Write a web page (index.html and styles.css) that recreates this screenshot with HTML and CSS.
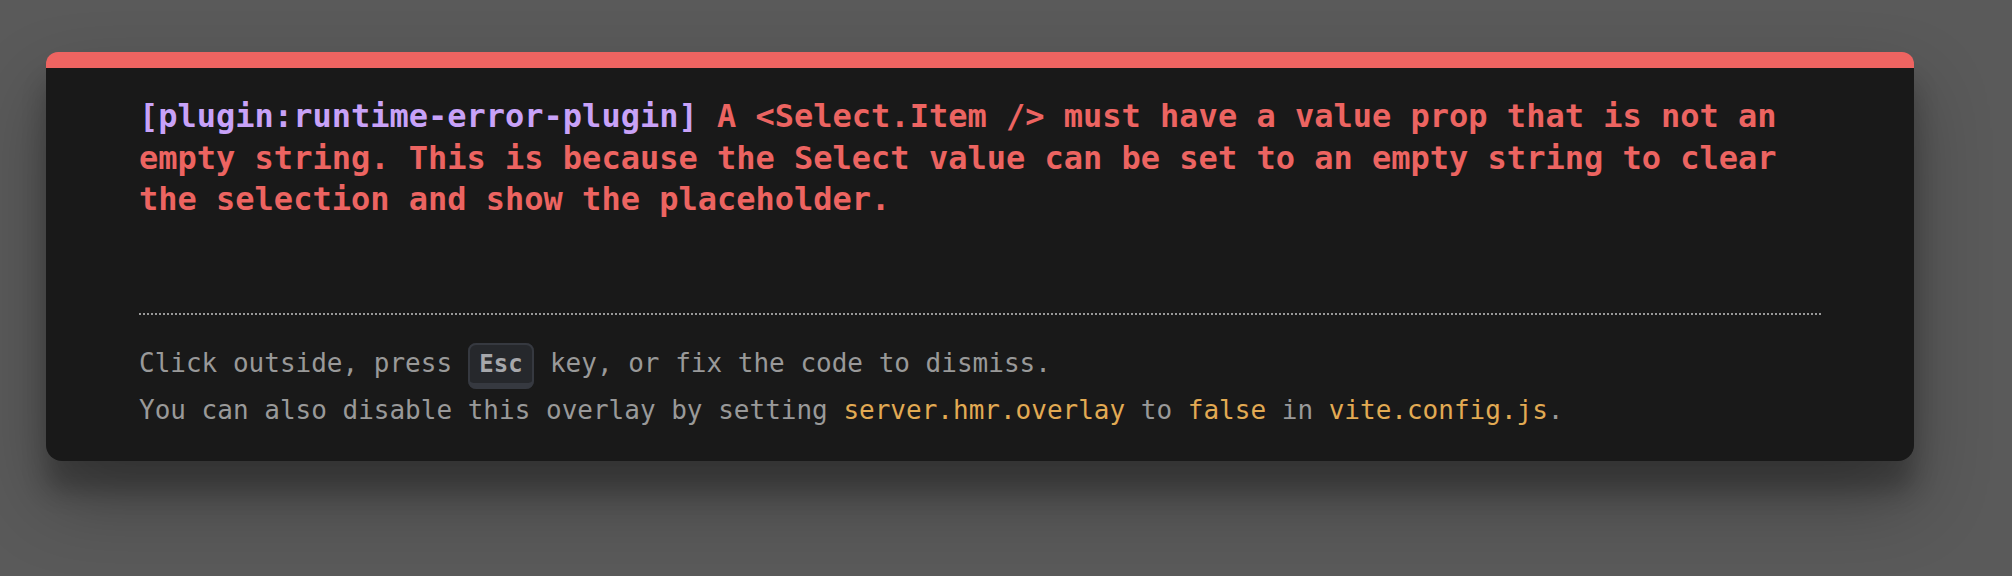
FILE: index.html
```html
<!DOCTYPE html>
<html lang="en">
<head>
<meta charset="utf-8">
<title>Vite error overlay</title>
<link rel="stylesheet" href="styles.css">
</head>
<body>
<div class="backdrop">
  <div class="window">
    <pre class="message"><span class="plugin">[plugin:runtime-error-plugin]</span> <span class="message-body">A &lt;Select.Item /&gt; must have a value prop that is not an empty string. This is because the Select value can be set to an empty string to clear the selection and show the placeholder.</span></pre>
    <div class="tip">Click outside, press <kbd>Esc</kbd> key, or fix the code to dismiss.<br>You can also disable this overlay by setting <code>server.hmr.overlay</code> to <code>false</code> in <code>vite.config.js</code>.</div>
  </div>
</div>
</body>
</html>
```

FILE: styles.css
```css
html, body {
  margin: 0;
  padding: 0;
  background: #5a5a5a;
  width: 2012px;
  height: 576px;
  overflow: hidden;
}

.backdrop {
  padding: 52px 0 0 46px;
}

.window {
  font-family: "DejaVu Sans Mono", "Liberation Mono", monospace;
  width: 1868px;
  box-sizing: border-box;
  padding: 28px 93px 28px 93px;
  background: #191919;
  color: #d8d8d8;
  border-top: 16px solid #ee6461;
  border-radius: 12px 12px 16px 16px;
  box-shadow: 0 38px 76px rgba(0, 0, 0, 0.30), 0 30px 24px rgba(0, 0, 0, 0.22);
  overflow: hidden;
}

.message {
  font-family: "DejaVu Sans Mono", "Liberation Mono", monospace;
  font-size: 32px;
  line-height: 1.3;
  font-weight: 700;
  white-space: pre-wrap;
  margin: 0 0 92px 0;
}

.plugin {
  color: #c8a2f8;
}

.message-body {
  color: #ec6461;
}

.tip {
  font-size: 26px;
  color: #999999;
  border-top: 2px dotted #999999;
  padding-top: 25px;
  line-height: 1.8;
}

code {
  font-family: "DejaVu Sans Mono", "Liberation Mono", monospace;
  font-size: 26px;
  color: #e2aa53;
}

kbd {
  font-family: "DejaVu Sans Mono", "Liberation Mono", monospace;
  font-size: 24px;
  line-height: 1.5;
  font-weight: 700;
  background-color: rgb(38, 40, 44);
  color: rgb(166, 167, 171);
  padding: 4.8px 9.6px;
  border-radius: 8px;
  border-style: solid;
  border-width: 2px 2px 6px;
  border-color: rgb(54, 57, 64);
}
```
